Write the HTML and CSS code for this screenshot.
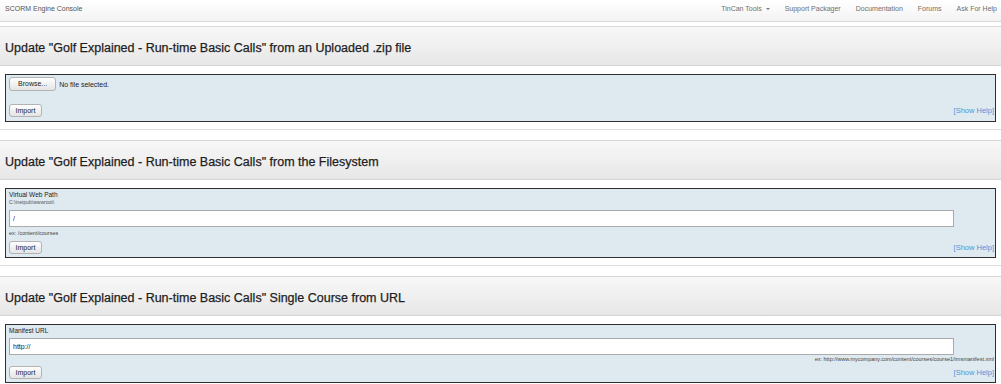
FILE: index.html
```html
<!DOCTYPE html>
<html>
<head>
<meta charset="utf-8">
<title>SCORM Engine Console</title>
<link rel="stylesheet" href="styles.css">
</head>
<body>
<nav class="navbar">
  <a class="brand">SCORM Engine Console</a>
  <ul class="nav">
    <li><a>TinCan Tools <span class="caret"></span></a></li>
    <li><a>Support Packager</a></li>
    <li><a>Documentation</a></li>
    <li><a>Forums</a></li>
    <li><a>Ask For Help</a></li>
  </ul>
</nav>

<section class="section first">
  <h2 class="section-title">Update "Golf Explained - Run-time Basic Calls" from an Uploaded .zip file</h2>
  <form class="panel panel-upload">
    <div class="file-row">
      <button type="button" class="btn btn-browse">Browse...</button>
      <span class="file-status">No file selected.</span>
    </div>
    <div class="action-row">
      <button type="button" class="btn btn-import">Import</button>
      <a class="help-link">[Show Help]</a>
    </div>
  </form>
</section>

<section class="section">
  <h2 class="section-title">Update "Golf Explained - Run-time Basic Calls" from the Filesystem</h2>
  <form class="panel">
    <label class="field-label">Virtual Web Path</label>
    <div class="field-prefix">C:\inetpub\wwwroot\</div>
    <input class="text-input" type="text" value="/">
    <div class="field-hint">ex: /content/courses</div>
    <div class="action-row">
      <button type="button" class="btn btn-import">Import</button>
      <a class="help-link">[Show Help]</a>
    </div>
  </form>
</section>

<section class="section">
  <h2 class="section-title">Update "Golf Explained - Run-time Basic Calls" Single Course from URL</h2>
  <form class="panel panel-url">
    <label class="field-label">Manifest URL</label>
    <input class="text-input" type="text" value="http://">
    <div class="field-hint hint-right">ex: http://www.mycompany.com/content/courses/course1/imsmanifest.xml</div>
    <div class="action-row">
      <button type="button" class="btn btn-import">Import</button>
      <a class="help-link">[Show Help]</a>
    </div>
  </form>
</section>
</body>
</html>
```

FILE: styles.css
```css
* { box-sizing: border-box; }

html, body {
  margin: 0;
  padding: 0;
  background: #fff;
  font-family: "Liberation Sans", Arial, Helvetica, sans-serif;
  color: #222;
}

.navbar {
  height: 22px;
  display: flex;
  justify-content: space-between;
  align-items: flex-start;
  padding: 4px 4px 0 5px;
  background: linear-gradient(#ffffff, #f3f3f3);
  border-bottom: 1px solid #d8d8d8;
}

.brand {
  font-size: 7px;
  line-height: 9px;
  color: #555;
}

.nav {
  list-style: none;
  margin: 0;
  padding: 0;
  display: flex;
  gap: 15px;
}

.nav a {
  font-size: 7px;
  line-height: 9px;
  color: #6f6f6f;
  display: flex;
  align-items: center;
}

.caret {
  display: inline-block;
  width: 0;
  height: 0;
  margin-left: 4px;
  border-left: 2.5px solid transparent;
  border-right: 2.5px solid transparent;
  border-top: 2.5px solid #777;
}

.section {
  border-top: 1px solid #dcdcdc;
  padding-top: 10px;
}

.section.first {
  border-top: 0;
  padding-top: 4px;
}

.section-title {
  margin: 0;
  height: 40px;
  padding: 14px 0 0 5px;
  font-size: 12.5px;
  line-height: 15px;
  font-weight: normal;
  color: #1e1e1e;
  background: linear-gradient(#f8f8f8, #e7e7e7);
  border-top: 1px solid #d8d8d8;
  border-bottom: 1px solid #d4d4d4;
  -webkit-text-stroke: 0.25px #1e1e1e;
}

.panel {
  margin: 8px 5px 7px 5px;
  padding: 2px 1px 3px 3px;
  background: #dfe9f0;
  border: 1px solid #2f2f2f;
  display: flex;
  flex-direction: column;
  align-items: flex-start;
}

.panel-upload {
  padding-bottom: 4px;
}

.file-row {
  display: flex;
  align-items: center;
  gap: 3px;
  height: 14px;
  margin-bottom: 13px;
}

.btn {
  font-family: "Liberation Sans", Arial, sans-serif;
  font-size: 7px;
  color: #222;
  background: linear-gradient(#ffffff, #e4e4e4);
  border: 1px solid #b3b3b3;
  border-radius: 3px;
  margin: 0;
  cursor: default;
}

.btn-browse {
  height: 14px;
  padding: 0 8px;
  line-height: 12px;
}

.btn-import {
  height: 13px;
  padding: 0 5.5px;
  line-height: 11px;
}

.file-status {
  font-size: 7px;
  color: #222;
}

.action-row {
  align-self: stretch;
  display: flex;
  justify-content: space-between;
  align-items: center;
}

.help-link {
  font-size: 7.5px;
  color: #5095da;
}

.field-label {
  font-size: 6.5px;
  line-height: 8px;
  color: #222;
}

.field-prefix {
  font-size: 5px;
  line-height: 7px;
  color: #555;
}

.text-input {
  width: 945px;
  height: 17px;
  margin: 4px 0 0 0;
  padding: 0 3px;
  font-family: "Liberation Sans", Arial, sans-serif;
  font-size: 7px;
  color: #222;
  background: #fff;
  border: 1px solid #ababab;
  border-radius: 0;
  outline: none;
}

.panel-url .text-input {
  margin-top: 3px;
}

.field-hint {
  font-size: 5.5px;
  line-height: 7px;
  color: #444;
  margin-top: 3px;
  margin-bottom: 4px;
}

.hint-right {
  align-self: stretch;
  text-align: right;
  margin-top: 1px;
  line-height: 6px;
}
```
